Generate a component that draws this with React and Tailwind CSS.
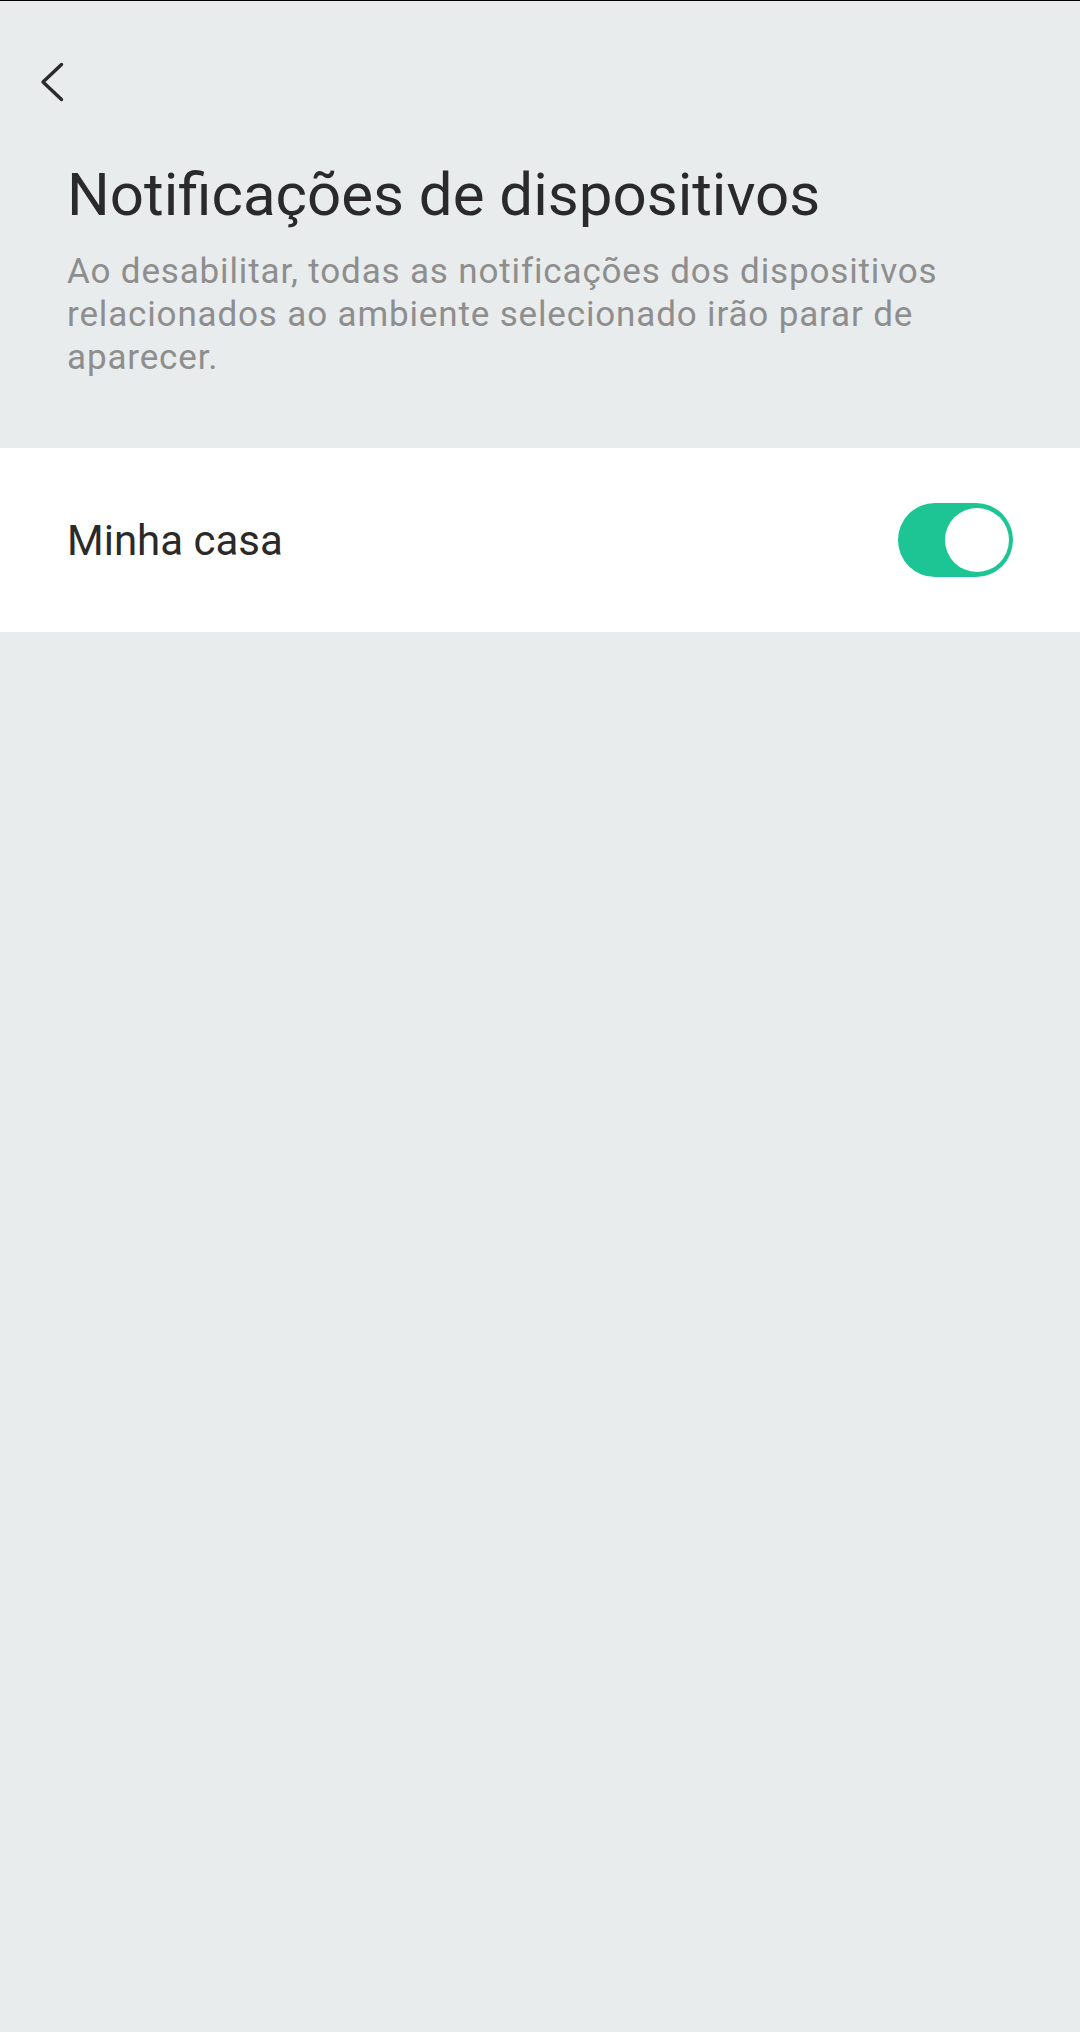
import React from "react";

export default function App() {
  return (
    <div
      className="w-[1080px] min-h-[2032px] bg-[#e9eced] border-t border-black flex flex-col"
      style={{ fontFamily: "Roboto, 'Noto Sans', sans-serif" }}
    >
      <div className="pl-[40px] pt-[61px]">
        <svg width="24" height="40" viewBox="0 0 24 40" fill="none">
          <polyline
            points="21.5,2.5 3,20 21.5,37.5"
            stroke="#2a2a2a"
            strokeWidth="3.4"
            strokeLinecap="round"
            strokeLinejoin="round"
          />
        </svg>
      </div>
      <div className="px-[67px] pt-[57px]">
        <h1 className="text-[60px] leading-[72px] text-[#2a2a2a] font-normal">
          Notificações de dispositivos
        </h1>
        <p className="mt-[19px] text-[35px] leading-[43px] tracking-[0.85px] text-[#8e8e8e]">
          Ao desabilitar, todas as notificações dos dispositivos relacionados ao ambiente selecionado irão parar de aparecer.
        </p>
      </div>
      <div className="mt-[69px] bg-white h-[184px] flex items-center justify-between pl-[67px] pr-[67px]">
        <span className="text-[42px] text-[#2a2a2a]">Minha casa</span>
        <div className="w-[115px] h-[74px] rounded-full bg-[#1cc593] flex items-center justify-end pr-[4px]">
          <div className="w-[64px] h-[64px] rounded-full bg-white" />
        </div>
      </div>
    </div>
  );
}
